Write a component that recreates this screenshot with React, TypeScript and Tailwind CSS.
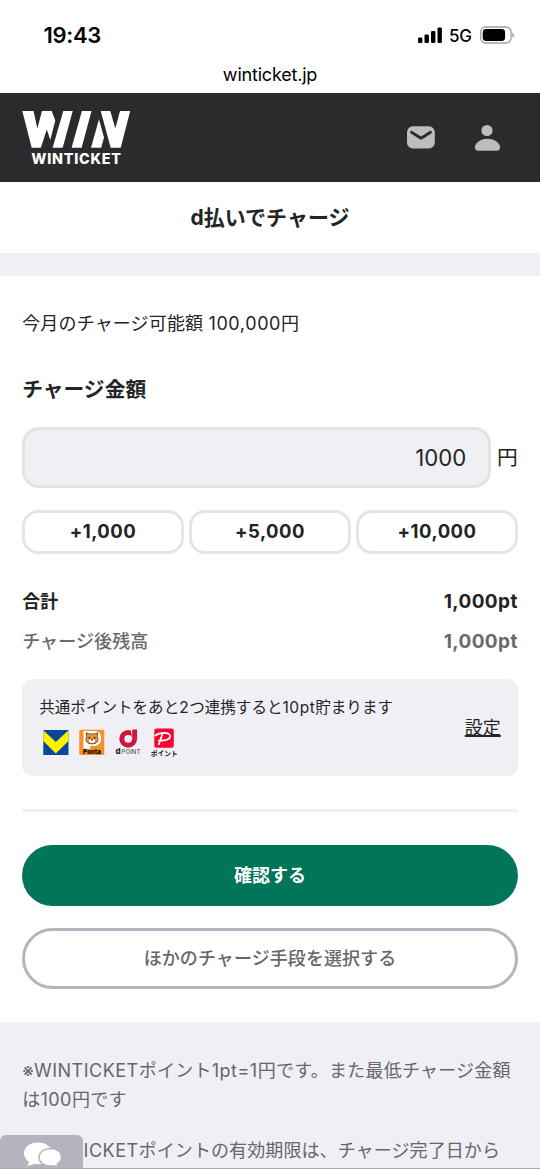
import type { ReactNode } from "react";

function Latin({ children }: { children: ReactNode }) {
  return <span className="tracking-[0.5px]">{children}</span>;
}

function StatusBar() {
  return (
    <div className="flex h-[93px] flex-col bg-white text-black">
      <div className="flex h-[60px] items-start justify-between pt-[20px] pr-[25px] pl-[43.500px]">
        <span className="text-[22px] leading-[30px] font-semibold tracking-[-0.3px]">19:43</span>
        <div className="flex h-[30px] items-center">
          <svg className="h-[16px] w-[24px]" viewBox="0 0 24 16">
            <rect x="0" y="10.5" width="4.4" height="5.5" rx="1.2" />
            <rect x="6.5" y="7.5" width="4.4" height="8.5" rx="1.2" />
            <rect x="13" y="4" width="4.4" height="12" rx="1.2" />
            <rect x="19.5" y="0.5" width="4.4" height="15.5" rx="1.2" />
          </svg>
          <span className="ml-[7px] w-[24px] pt-px text-[17px] leading-[30px] font-medium tracking-[-0.3px]">5G</span>
          <svg className="ml-[7px] h-[18px] w-[35px]" viewBox="0 0 35 18">
            <rect x="0.7" y="1" width="30.4" height="16" rx="5" fill="none" stroke="#a0a0a0" strokeWidth="1.3" />
            <rect x="2.7" y="3" width="22.4" height="12" rx="3.4" />
            <path d="M32.3 6.4c2.2.7 2.2 4.5 0 5.2z" fill="#a0a0a0" />
          </svg>
        </div>
      </div>
      <div className="pt-[3px] text-center text-[18px] leading-6 tracking-[-0.2px]">winticket.jp</div>
    </div>
  );
}

function Header() {
  return (
    <header className="flex h-[89px] items-start justify-between bg-[#2b2b2e] pt-[17px] pr-[40px] pl-[22px]">
      <div className="flex w-[109px] flex-col items-center">
        <svg className="h-[38px] w-[109px]" viewBox="0 0 109 38" fill="#fff">
          <path d="M.3 1H11.600L15.300 18.500 20 1H29.700L33.300 10.500 28.300 30 24.800 19.500 18.800 37.700H9.700z" />
          <path d="M41.300 1h9.400L40.700 37.700H30.600z" />
          <path d="M59.900 1h9.600L59.600 37.700H49.600z" />
          <path d="M78.700 1H88.300L93.300 18.500 98 1H108.200L98.700 37.700H88.700z" />
          <path d="M77 9.300 82 27.500 79.200 37.700H69z" />
        </svg>
        <span className="mt-[3px] text-[14.3px] leading-[15px] font-extrabold tracking-[0.75px] whitespace-nowrap text-white">WINTICKET</span>
      </div>
      <div className="flex items-center gap-[40px] pt-[14px]">
        <svg className="h-[28px] w-[28px]" viewBox="0 0 28 28">
          <rect x="0" y="2.200" width="27.800" height="22.300" rx="6" fill="#bdbdbd" />
          <path d="M4.500 8.300 14 14.200 23.500 8.300" fill="none" stroke="#2b2b2e" strokeWidth="2.800" strokeLinecap="round" strokeLinejoin="round" />
        </svg>
        <svg className="h-[28px] w-[25px]" viewBox="0 0 25 28" fill="#bdbdbd">
          <circle cx="12" cy="6.500" r="5.600" />
          <path d="M12.500 14.800C5.500 14.800 0 19 0 23.200 0 25.500 1.200 26.800 3.300 26.800H21.700C23.800 26.800 25 25.500 25 23.200 25 19 19.500 14.800 12.500 14.800z" />
        </svg>
      </div>
    </header>
  );
}

function AmountButton({ children }: { children: ReactNode }) {
  return (
    <button className="h-[44px] flex-1 rounded-[16px] border-3 border-[#e4e4ea] bg-white text-center text-[18.5px] font-bold tracking-[0.5px]">
      {children}
    </button>
  );
}

function PointLogos() {
  return (
    <div className="mt-[8px] ml-[4px] flex items-start">
      <svg className="h-[27px] w-[26px]" viewBox="0 0 26 27">
        <rect x="0.300" y="2" width="25.200" height="25" fill="#0a469b" />
        <path d="M.3 2.200 12.800 14 25.500 2.200V13L12.800 25.500.3 13z" fill="#fff100" />
      </svg>
      <svg className="ml-[10px] h-[27px] w-[26px]" viewBox="0 0 26 27">
        <rect x="0.300" y="1.700" width="25" height="25.300" rx="1.500" fill="#fa9028" />
        <path d="M4.500 3h11c4 0 6.700 2.800 6.700 7.300 0 5-3.200 7.700-7 7.700h-4v2.800H4.500z" fill="#fff" />
        <path d="M7.800 8.700 7.200 4.800 10.500 6h5L18.700 4.800l-.5 4.100c2.200 4.300-.7 7-5.200 7s-7.500-2.700-5.200-7.200z" fill="#f5942e" stroke="#493126" strokeWidth="0.800" />
        <ellipse cx="13" cy="12.800" rx="3" ry="2" fill="#fff" />
        <circle cx="10.500" cy="9.700" r="1" fill="#332923" />
        <circle cx="15.600" cy="9.700" r="1" fill="#332923" />
        <ellipse cx="13" cy="11.800" rx="1.200" ry="0.700" fill="#332923" />
        <text x="13" y="25.500" textAnchor="middle" textLength="18" lengthAdjust="spacingAndGlyphs" fontSize="6.500" fontWeight="900" fill="#17110a">Ponta</text>
      </svg>
      <svg className="ml-[10px] h-[27px] w-[26px]" viewBox="0 0 26 27">
        <circle cx="13.200" cy="10.800" r="6.400" fill="none" stroke="#cc163d" strokeWidth="5" />
        <path d="M15.800 1H22.400V10.600H17z" fill="#f0eff4" />
        <path d="M17.200 1.500H22.100V10.800H17.200z" fill="#cc163d" />
        <text x="0.500" y="26" fontSize="8" fontWeight="800" fill="#222">d</text>
        <text x="6.500" y="26" textLength="19" lengthAdjust="spacingAndGlyphs" fontSize="6.200" fill="#444">POINT</text>
      </svg>
      <svg className="ml-[9px] h-[34px] w-[30px] overflow-visible" viewBox="0 0 30 34">
        <rect x="4.300" y="0.500" width="19.500" height="19.300" rx="2.200" fill="#ff0033" />
        <path d="M8.500 17 12.800 5M4.800 7.800c5-3.600 15.400-4.200 15.400.5 0 3.400-5.600 4.700-12.200 4.200" fill="none" stroke="#fff" strokeWidth="1.700" />
        <text x="0.800" y="28" textLength="27" lengthAdjust="spacingAndGlyphs" fontSize="7" fontWeight="700" fill="#111">ポイント</text>
      </svg>
    </div>
  );
}

export default function App() {
  return (
    <div className="relative flex h-[1169px] w-[540px] flex-col overflow-hidden bg-white font-['Inter','Noto_Sans_CJK_JP',sans-serif] text-[18px] text-[#242426]">
      <StatusBar />
      <Header />
      <h1 className="flex h-[71px] items-center justify-center pt-px text-[21px] leading-[30px] font-bold">d払いでチャージ</h1>
      <div className="h-[23px] shrink-0 bg-[#f0eff4]" />

      <main className="flex h-[746px] shrink-0 flex-col px-[22.200px] pt-[34px]">
        <p className="leading-[28px] tracking-[0.16px]">今月のチャージ可能額 <span className="tracking-[0.6px]">100,000</span>円</p>
        <h2 className="mt-[37px] text-[20.77px] leading-[30px] font-bold">チャージ金額</h2>
        <div className="mt-[22px] flex items-center justify-between">
          <div className="flex h-[61px] w-[469px] items-center justify-end rounded-[17px] border-3 border-[#e3e2e9] bg-[#f0eff4] pt-[2px] pr-[22px] text-[22.15px]">
            1000
          </div>
          <span className="pt-px text-[20.77px] leading-[30px]">円</span>
        </div>
        <div className="mt-[22px] flex gap-[5.500px]">
          <AmountButton>+1,000</AmountButton>
          <AmountButton>+5,000</AmountButton>
          <AmountButton>+10,000</AmountButton>
        </div>
        <div className="mt-[34px] flex justify-between leading-[28px] font-bold">
          <span>合計</span>
          <span className="text-[19px] tracking-[0.4px]">1,000pt</span>
        </div>
        <div className="mt-[12px] flex justify-between leading-[28px] font-bold text-[#696970]">
          <span className="font-medium tracking-[0.1px]">チャージ後残高</span>
          <span className="text-[19px] tracking-[0.4px]">1,000pt</span>
        </div>
        <section className="mt-[23px] flex h-[97px] items-start justify-between rounded-[11px] bg-[#f0eff4] pr-[17px] pl-[17px]">
          <div className="pt-[16px]">
            <p className="text-[15.5px] leading-[25px] tracking-[0.06px] whitespace-nowrap">共通ポイントをあと<Latin>2</Latin>つ連携すると<Latin>10pt</Latin>貯まります</p>
            <PointLogos />
          </div>
          <a className="mt-[35px] leading-[28px] underline decoration-[1.500px] underline-offset-[1px]">設定</a>
        </section>
        <div className="mt-[33px] h-[3px] shrink-0 bg-[#f0eff4]" />
        <button className="mt-[33px] h-[61px] shrink-0 rounded-full bg-[#00755a] font-bold text-white">確認する</button>
        <button className="mt-[22px] h-[61px] shrink-0 rounded-full border-3 border-[#b4b4be] font-medium tracking-[0.08px] text-[#66666d]">ほかのチャージ手段を選択する</button>
      </main>

      <footer className="h-[147px] shrink-0 bg-[#f0eff4] px-[22.200px] pt-[34px] leading-[29px] tracking-[0.1px] text-[#66666d]">
        <p className="tracking-[0.25px] whitespace-nowrap">※<Latin>WINTICKET</Latin>ポイント<Latin>1pt=1</Latin>円です。また最低チャージ金額<br />は<Latin>100</Latin>円です</p>
        <p className="mt-[22px] whitespace-nowrap">※<Latin>WINTICKET</Latin>ポイントの有効期限は、チャージ完了日から</p>
      </footer>

      <div className="absolute bottom-0 left-0 h-[34px] w-[83px] rounded-t-[6px] bg-[#b4b4be]">
        <svg className="h-[34px] w-[83px]" viewBox="0 0 83 34">
          <path d="M38 7.500c-8 0-14 4.500-14 11 0 3.500 2 6.500 5 8.500-.3 1.600-1 2.600-1.800 3.800 2.800-.2 5.300-1 7-2 1.200.3 2.500.4 3.800.4 8 0 14.500-4.500 14.500-10.700S46 7.500 38 7.500z" fill="#fff" />
          <path d="M50.500 13.500C44 13.500 39 17.300 39 22.300s5 8.700 11.500 8.700c1 0 2-.1 3-.3 1.500.8 3 1.200 5 1.300-.7-1-1.100-1.900-1.300-3 2.600-1.600 4.400-4 4.400-6.700 0-5-4.800-8.800-11.100-8.800z" fill="#fff" stroke="#b4b4be" strokeWidth="1.500" />
        </svg>
      </div>
      <div className="absolute bottom-0 left-0 h-px w-full bg-[#a9a9ad]" />
    </div>
  );
}
